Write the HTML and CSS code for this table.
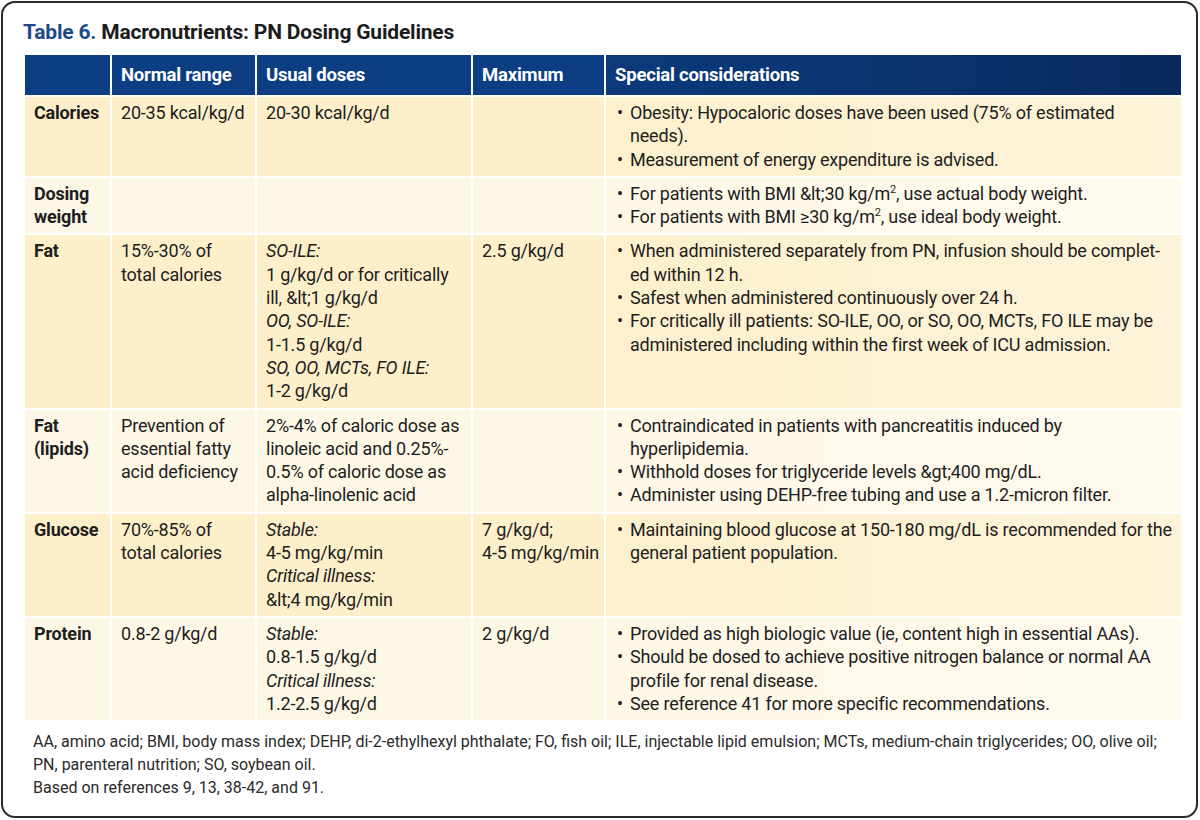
FILE: index.html
```html
<!DOCTYPE html>
<html lang="en">
<head>
<meta charset="utf-8">
<title>Table 6. Macronutrients: PN Dosing Guidelines</title>
<link rel="stylesheet" href="styles.css">
</head>
<body>
<div class="frame">
  <h1 class="title"><span class="tnum">Table 6.</span> Macronutrients: PN Dosing Guidelines</h1>
  <table class="grid">
    <colgroup>
      <col class="c1"><col class="c2"><col class="c3"><col class="c4"><col class="c5">
    </colgroup>
    <thead>
      <tr>
        <th></th>
        <th>Normal range</th>
        <th>Usual doses</th>
        <th>Maximum</th>
        <th>Special considerations</th>
      </tr>
    </thead>
    <tbody>
      <tr class="dark">
        <th>Calories</th>
        <td>20-35 kcal/kg/d</td>
        <td>20-30 kcal/kg/d</td>
        <td></td>
        <td><ul><li>Obesity: Hypocaloric doses have been used (75% of estimated<br>needs).</li><li>Measurement of energy expenditure is advised.</li></ul></td>
      </tr>
      <tr class="light">
        <th>Dosing weight</th>
        <td></td>
        <td></td>
        <td></td>
        <td><ul><li>For patients with BMI &amp;lt;30 kg/m<sup>2</sup>, use actual body weight.</li><li>For patients with BMI ≥30 kg/m<sup>2</sup>, use ideal body weight.</li></ul></td>
      </tr>
      <tr class="dark">
        <th>Fat</th>
        <td>15%-30% of total calories</td>
        <td><em>SO-ILE:</em><br>1 g/kg/d or for critically ill, &amp;lt;1 g/kg/d<br><em>OO, SO-ILE:</em><br>1-1.5 g/kg/d<br><em>SO, OO, MCTs, FO ILE:</em><br>1-2 g/kg/d</td>
        <td>2.5 g/kg/d</td>
        <td><ul><li>When administered separately from PN, infusion should be complet-<br>ed within 12 h.</li><li>Safest when administered continuously over 24 h.</li><li>For critically ill patients: SO-ILE, OO, or SO, OO, MCTs, FO ILE may be administered including within the first week of ICU admission.</li></ul></td>
      </tr>
      <tr class="light">
        <th>Fat (lipids)</th>
        <td>Prevention of essential fatty acid deficiency</td>
        <td>2%-4% of caloric dose as linoleic acid and 0.25%-<br>0.5% of caloric dose as alpha-linolenic acid</td>
        <td></td>
        <td><ul><li>Contraindicated in patients with pancreatitis induced by hyperlipidemia.</li><li>Withhold doses for triglyceride levels &amp;gt;400 mg/dL.</li><li>Administer using DEHP-free tubing and use a 1.2-micron filter.</li></ul></td>
      </tr>
      <tr class="dark">
        <th>Glucose</th>
        <td>70%-85% of total calories</td>
        <td><em>Stable:</em><br>4-5 mg/kg/min<br><em>Critical illness:</em><br>&amp;lt;4 mg/kg/min</td>
        <td>7 g/kg/d;<br>4-5 mg/kg/min</td>
        <td><ul><li>Maintaining blood glucose at 150-180 mg/dL is recommended for the general patient population.</li></ul></td>
      </tr>
      <tr class="light">
        <th>Protein</th>
        <td>0.8-2 g/kg/d</td>
        <td><em>Stable:</em><br>0.8-1.5 g/kg/d<br><em>Critical illness:</em><br>1.2-2.5 g/kg/d</td>
        <td>2 g/kg/d</td>
        <td><ul><li>Provided as high biologic value (ie, content high in essential AAs).</li><li>Should be dosed to achieve positive nitrogen balance or normal AA profile for renal disease.</li><li>See reference 41 for more specific recommendations.</li></ul></td>
      </tr>
    </tbody>
  </table>
  <div class="notes">
    <p>AA, amino acid; BMI, body mass index; DEHP, di-2-ethylhexyl phthalate; FO, fish oil; ILE, injectable lipid emulsion; MCTs, medium-chain triglycerides; OO, olive oil; PN, parenteral nutrition; SO, soybean oil.</p>
    <p>Based on references 9, 13, 38-42, and 91.</p>
  </div>
</div>
</body>
</html>
```

FILE: styles.css
```css
html, body {
  margin: 0;
  padding: 0;
  background: #ffffff;
}

body {
  font-family: "Roboto", "Liberation Sans", sans-serif;
  color: #1f1d1e;
}

.frame {
  box-sizing: border-box;
  width: 1197px;
  height: 817px;
  margin: 1px 0 0 1px;
  border: 2px solid #2a2a2a;
  border-radius: 14px;
  padding: 16px 0 0 19px;
}

.title {
  margin: 0 0 13px 1px;
  font-size: 21px;
  line-height: 26px;
  font-weight: 700;
  letter-spacing: -0.2px;
  color: #1c1c1c;
}

.tnum {
  color: #1d4a8a;
}

.grid {
  border-collapse: separate;
  border-spacing: 2px;
  table-layout: fixed;
  width: 1160px;
  margin-left: 1px;
  margin-top: -5px;
}

.c1 { width: 85px; }
.c2 { width: 143px; }
.c3 { width: 214px; }
.c4 { width: 131px; }
.c5 { width: 575px; }

thead th {
  height: 40px;
  padding: 0 4px 0 9px;
  box-sizing: border-box;
  background: #0d3d82;
  color: #ffffff;
  font-size: 18.5px;
  font-weight: 700;
  letter-spacing: -0.2px;
  text-align: left;
  vertical-align: middle;
}

thead th:last-child {
  background: linear-gradient(90deg, #0c3a7d 0%, #0a3068 70%, #082a5c 100%);
}

tbody th,
tbody td {
  padding: 4px 4px 5px 9px;
  font-size: 18px;
  line-height: 23.3px;
  letter-spacing: -0.2px;
  text-align: left;
  vertical-align: top;
}

tbody th {
  font-weight: 700;
}

tbody td {
  font-weight: 400;
}

tr.dark th,
tr.dark td {
  background: #fcefca;
}

tr.dark td:last-child {
  background: linear-gradient(90deg, #fcf0cd 0%, #fdf3d8 100%);
}

tr.light th,
tr.light td {
  background: #fdf7e6;
}

tr.light td:last-child {
  background: linear-gradient(90deg, #fdf7e6 0%, #fefaee 100%);
}

em {
  font-style: italic;
}

sup {
  font-size: 11px;
  line-height: 0;
  vertical-align: 7px;
}

ul {
  list-style: none;
  margin: 0;
  padding: 0 0 0 2px;
}

li {
  padding-left: 13px;
  text-indent: -13px;
}

li::before {
  content: "•";
  display: inline-block;
  width: 13px;
  text-indent: 0;
}

.notes {
  margin: 8px 0 0 11px;
  font-size: 16px;
  line-height: 23px;
  color: #2a2a2a;
  width: 1150px;
}

.notes p {
  margin: 0;
}
```
